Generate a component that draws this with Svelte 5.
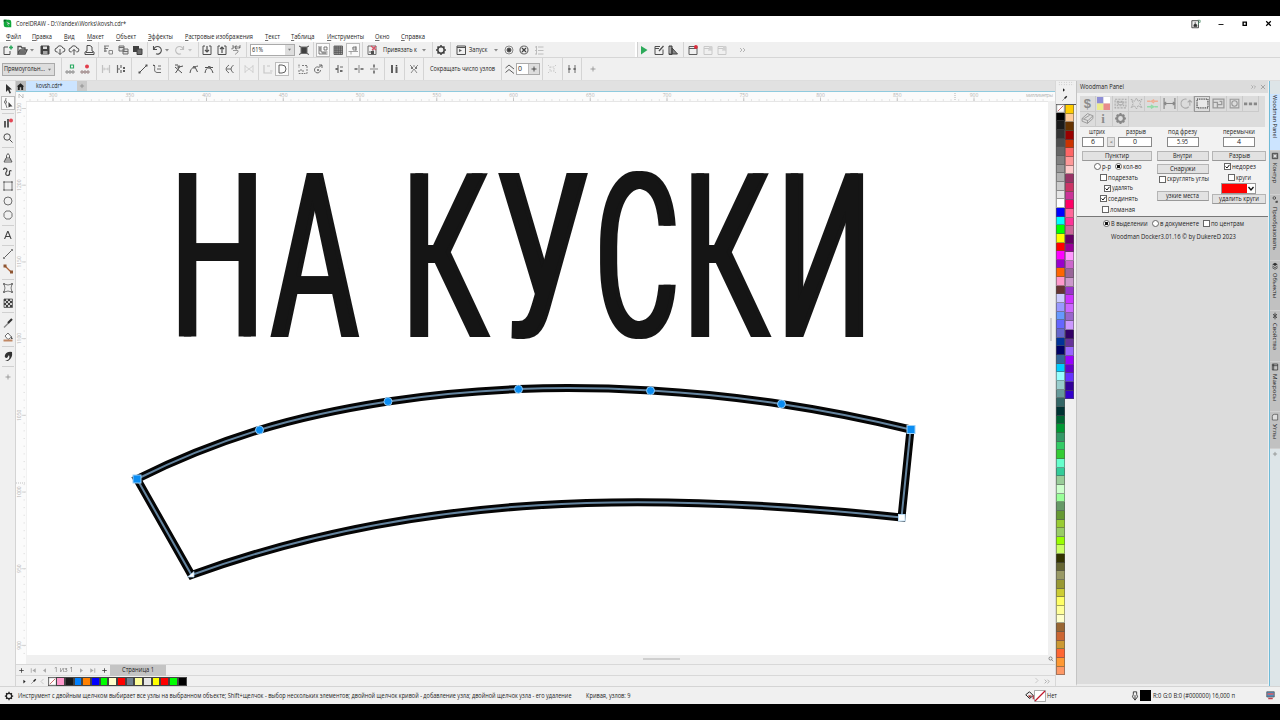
<script>
  // icons are drawn on a 12x12 grid: [path, fill, stroke, stroke width]
  const ink = '#333';
  const pale = '#b5b5b5';
  const icons = {
    logo: [['M1 1H8Q11 1 11 4V11H4Q1 11 1 8Z', '#10a83a'], ['M1 4L5 1H1Z', '#075b24'], ['M4 3L9 6L7 9Z', '#fff'], ['M3 2L8 8', '', '#0b6b2b', 1]],
    fresh: [['M2 3H6M2 3V10.500H8V7', '', ink, 1], ['M7 3.500H11M9 1.500V5.500', '', '#0a9d45', 1.600]],
    open: [['M2 10V2.500H5L6 4H9V5.500M2 10L4 6H11L9 10Z', '', ink, 1.300], ['M4 6.500H10L9 10H2.500Z', '#555']],
    save: [['M2 2H10V10H2Z', '#222', '#222', 1], ['M4 2.500H8V5H4Z', '#ddd'], ['M4 7H8.500V10H4Z', '#999']],
    cloudDown: [['M3.500 8H3A2 2 0 0 1 3 4A3 3 0 0 1 8.800 4A2 2 0 0 1 9 8H8.500', '', ink, 1], ['M6 5V10.500M4 8.500L6 10.500L8 8.500', '', ink, 1]],
    cloudUp: [['M3.500 8H3A2 2 0 0 1 3 4A3 3 0 0 1 8.800 4A2 2 0 0 1 9 8H8.500', '', ink, 1], ['M6 11V5.500M4 7.500L6 5.500L8 7.500', '', ink, 1]],
    print: [['M4 7V1.500H7L9 3V7M4 7L2 8V10.500H11V8L9 7M3 8.500H10', '', ink, 1]],
    cut: [['M2 2H7M2 4.500H6M2 7H5M3 2V8', '', '#666', 1.200], ['M7 6.500H10.500V10H7Z', '', '#777', 1]],
    copy: [['M2 2H7V7H2ZM6 5H11V10H6Z', '#ddd', '#555', 1], ['M2 3.500H7M6 7.500H11', '', '#555', 1]],
    paste: [['M2 2H8V8H2Z', '#222'], ['M6 5H11V10.500H6Z', '#555', '#222', 1]],
    undo: [['M2.500 2V5.500H6M3 5A3.800 3.800 0 1 1 5 9.800', '', ink, 1.100]],
    redo: [['M9.500 2V5.500H6M9 5A3.800 3.800 0 1 0 7 9.800', '', pale, 1.100]],
    down: [['M4 5H8L6 7.500Z', '#777']],
    downPale: [['M4 5H8L6 7.500Z', '#bbb']],
    imp: [['M4 2H2V10.500H10V2H8', '', ink, 1], ['M6 2V8M4 6L6 8L8 6', '', ink, 1.200]],
    exp: [['M4 2H2V10.500H10V2H8', '', ink, 1], ['M6 9V3M4 5L6 3L8 5', '', ink, 1.200]],
    pdf: [['M2 2H4V4H2V5.500M5.500 5V2H7V5ZM9 5V2H11M9 3.500H10.500', '', '#444', .8], ['M3 6.500H8V8L5 10.500', '', '#888', 1]],
    full: [['M3 3H9V9.500H3Z', '#222', '#555', 1], ['M1 2L3 3M11 2L9 3M1 10.500L3 9.500M11 10.500L9 9.500', '', '#333', 1]],
    rulers: [['M2 2V10H10.500M4 2V8H10.500M2 4H4M2 6H4M6 8V10M8 8V10M7 3H10V6H7Z', '', '#555', .9]],
    grid: [['M2 2H10.500V10.500H2ZM4 2V10.500M6.200 2V10.500M8.300 2V10.500M2 4H10.500M2 6.200H10.500M2 8.300H10.500', '#999', '#333', .8]],
    guides: [['M4 10.500V7M1.500 7.500H11M5 4H9M9 2V7', '', '#888', .9], ['M6 3H9V6H6Z', '', '#555', .8]],
    snap: [['M2 2V10.500H10V2ZM3 8H7V5', '', '#555', 1], ['M5 2L10 6M10 2L6 6', '', '#d6354c', 1.200], ['M5 7H8V10H5Z', '#333']],
    gear: [['M9.200 6A3.200 3.200 0 1 1 2.800 6A3.200 3.200 0 0 1 9.200 6Z', '', '#222', 1.500], ['M6 1V2.500M6 9.500V11M1 6H2.500M9.500 6H11M2.500 2.500L3.600 3.600M8.400 8.400L9.500 9.500M2.500 9.500L3.600 8.400M8.400 3.600L9.500 2.500', '', '#222', 1.500]],
    launch: [['M2 2H10.500V10.500H2ZM2 3.500H10.500', '', '#333', 1], ['M4 5L7 6.500L4 8Z', '#444']],
    dotRing: [['M10 6A4 4 0 1 1 2 6A4 4 0 0 1 10 6Z', '', '#777', 1], ['M8 6A2 2 0 1 1 4 6A2 2 0 0 1 8 6Z', '#222', '#333', 1]],
    crossRing: [['M10 6A4 4 0 1 1 2 6A4 4 0 0 1 10 6Z', '', '#555', 1.200], ['M4 4L8 8M8 4L4 8', '', '#222', 1.300]],
    list: [['M3.500 2V10.500M5 3H10.500M5 6.500H10.500M5 10H10.500M3.500 3H2M3.500 6.500H2M3.500 10H2', '', pale, 1]],
    play: [['M3 2L9.500 6L3 10.500Z', '#0b9d3f']],
    macroEdit: [['M10 5.500V10.500H2V2.500H7M2 4.500H6', '', ink, 1], ['M6 7L10.500 2', '', ink, 1.300]],
    vba: [['M2 2V10.500H5V2ZM5 4L10.500 10H5Z', '#777', '#222', 1], ['M2 4H4M2 6H4M2 8H4', '', '#ddd', .7]],
    record: [['M2 2.500H10V10.500H2ZM2 4.500H10', '', '#444', 1], ['M10.800 3A1.900 1.900 0 1 1 7 3A1.900 1.900 0 0 1 10.800 3Z', '#d80d20']],
    winPale: [['M2 2.500H10V10.500H2ZM2 4.500H10M6 6H10', '', '#c2c2c2', 1], ['M7 2H10V6H7Z', '#ccc']],
    more: [['M4 4L6 6L4 8M7 4L9 6L7 8', '', '#999', .8]],
    plus: [['M6 3.500V8.500M3.500 6H8.500', '', '#888', .9]],
    plusDark: [['M6 3V9M3 6H9', '', '#333', 1]],
    addNode: [['M6.500 2H9.500V5H6.500Z', '#fff', '#0b9d4a', 1.200], ['M2 8H4V10H2ZM5 8H7V10H5ZM8 8H10V10H8Z', '', '#666', .8]],
    delNode: [['M10 3.500A2 2 0 1 1 6 3.500A2 2 0 0 1 10 3.500Z', '#e02030'], ['M2 8H4V10H2ZM5 8H7V10H5ZM8 8H10V10H8Z', '', '#755', .8]],
    joinPale: [['M2.500 2V10M9.500 2V10M2.500 6H5M7 6H9.500', '', '#bbb', 1.200], ['M4 4.500L5.500 6L4 7.500M8 4.500L6.500 6L8 7.500', '', '#bbb', .8]],
    breakNode: [['M2.500 2V10M6 2V5M6 7V10M2.500 6H5', '', '#555', 1.200], ['M8 4H10V6H8ZM8 7H10V9H8Z', '#444']],
    toLine: [['M2.500 9.500L9.500 2.500', '', ink, 1], ['M1.500 8.500H3.500V10.500H1.500ZM8.500 1.500H10.500V3.500H8.500Z', ink]],
    toCurve: [['M2 2C6 2 1 9 6 9.500H10M2 2.500H4M7 3H10M6 6H10', '', '#444', .9]],
    cusp: [['M2 2H5M2 4L9 10M6 4L10 3M2.500 10L6 5', '', ink, 1], ['M4.500 2.500H7V5H4.500Z', '#555']],
    smooth: [['M2 10C3 4 6 4 10 3M7 4L9.500 9', '', ink, 1], ['M5 3H7.500V5.500H5Z', '#555']],
    symm: [['M2 10C3 3 8 3 10 10M2 4.500H10', '', ink, 1], ['M5 3H7.500V5.500H5Z', '#555']],
    reverse: [['M6 2Q0 6 6 10M10.500 2Q5.500 6 10.500 10M3.500 6H8', '', '#555', 1]],
    closePale: [['M2 2V10M10 2V10M2 3L10 9M2 9L10 3', '', '#ccc', 1]],
    extractPale: [['M2 2V10H10M8 8H10.500M5 3H8', '', '#c0c0c0', 1.200]],
    closeCurve: [['M3 2H6A4 4 0 0 1 6 10H3Z', '', '#444', 1]],
    stretch: [['M2 1.500V5M2 7V10.500H6V7H2M5 2.500H10M10 3V10.500H7', '', '#666', 1, '2 1']],
    rotate: [['M8.500 7A3 3 0 1 1 7 4.300L10 2M7 2H10V5', '', '#555', 1], ['M5 6H7V8H5Z', '#777']],
    align: [['M5 2V10M2 6H4M7 4H10M7 8H10', '', '#555', 1.200], ['M3 5H5V7H3ZM7 7H9V9H7Z', '#555']],
    reflH: [['M6 2V10', '', '#777', 1], ['M1.500 6H4.500M7.500 6H10.500', '', '#444', 1.500]],
    reflV: [['M2 6H10', '', '#777', 1], ['M6 1.500V4.500M6 7.500V10.500', '', '#444', 1.500]],
    elastic: [['M3 2H5V10H3ZM7.500 4H9.500V10H7.500Z', '#444'], ['M8.500 2V3.500', '', '#222', 1.500]],
    selectAll: [['M2 2L4 4M10 2L8 4M6 2V4M3 10L6 6L9 10', '', '#777', 1], ['M3 4H5V6H3ZM7 4H9V6H7Z', '#666']],
    wave: [['M1.500 5L5 2L10 6M1.500 9.500L5 6.500L10 10.500', '', '#444', 1]],
    bboxPale: [['M2 2L4 4M10 2L8 4M2 10L4 8M10 10L8 8M4 4H8V8H4Z', '', '#c2c2c2', 1, '1.500 1']],
    bars: [['M3 2V10M9 2V10', '', '#555', 1], ['M2.300 5H4.500V7H2.300ZM7.500 5H9.700V7H7.500Z', '#555']],
    pointer: [['M4 1V9L6 7L7.500 10.500L9 10L7.500 6.500H10Z', '#111']],
    shape: [['M4 1Q2 5 5 11', '', '#555', .9], ['M2.500 4H4.500V6H2.500Z', '#fff', '#444', .7], ['M6.500 5L10.500 9.500H8.500L6.500 10.500Z', '#222']],
    crop: [['M2 4H4V10.500H2ZM5 2H7V10.500H5Z', '#444'], ['M11 3.500A2 2 0 1 1 7 3.500A2 2 0 0 1 11 3.500Z', '#e02a3a']],
    zoom: [['M8.300 5A3.200 3.200 0 1 1 1.900 5A3.200 3.200 0 0 1 8.300 5ZM7.500 7.500L10.500 10.500', '', '#333', 1]],
    pen: [['M2 10H10L8 6H4ZM4.500 6V3.500L6 1.500L7.500 3.500V6M3 8H9', '', '#333', .9]],
    freehand: [['M1.500 4Q2 1.500 4 2.500Q6 4 4 6.500Q3 9.500 6 9.500Q8 9 7.500 6.500Q7 4 9.500 5', '', '#222', 1.200]],
    rect: [['M2 2H10V10H2Z', '', '#555', .9], ['M1.200 1.200H2.800V2.800H1.200ZM9.200 1.200H10.800V2.800H9.200ZM1.200 9.200H2.800V10.800H1.200ZM9.200 9.200H10.800V10.800H9.200Z', '#555']],
    ellipse: [['M10 6A4 4 0 1 1 2 6A4 4 0 0 1 10 6Z', '', '#444', .9]],
    polygon: [['M4 2H8L10 4.500V7.500L8 10H4L2 7.500V4.500Z', '', '#444', .9]],
    line: [['M2 10L10 2', '', '#333', .9], ['M1 9H3V11H1ZM9 1H11V3H9Z', '#777']],
    connector: [['M3 3L9 9', '', '#a54b16', 1.300], ['M1.500 1.500H4.500V4.500H1.500ZM8 7.500H11V10.500H8Z', '#7c3a12']],
    envelope: [['M2 2Q6 4 10 2Q8 6 10 10Q6 8 2 10Q4 6 2 2Z', '', '#555', .9], ['M1 1H3V3H1ZM9 1H11V3H9ZM1 9H3V11H1ZM9 9H11V11H9Z', '#666']],
    checker: [['M2 2H10.500V10.500H2Z', '#ccc', '#333', .8], ['M2 2H4V4H2ZM6 2H8V4H6ZM4 4H6V6H4ZM8 4H10V6H8ZM2 6H4V8H2ZM6 6H8V8H6ZM4 8H6V10H4ZM8 8H10V10H8Z', '#222']],
    dropper: [['M2 10.500L7 5.500', '', '#777', 1.500], ['M6 6L10 2', '', '#111', 2.200]],
    bucket: [['M3 5L6 2L9.500 6L6 8.500Z', '#fff', '#444', .9], ['M1.500 8.500H10.500V10.500H1.500Z', '#b9774c'], ['M9 5L11 8H9Z', '#333']],
    brush: [['M3 10.500Q9 10 7 5L5 8Q2 8 3 5Q5 1 10 2Q11 8 6 11Z', '#111']],
    noFill: [['M1 1H11V11H1Z', '#fff', '#777', .8], ['M2.500 9.500L9.500 2.500', '', '#c04040', 1]],
    noFillBig: [['M.500 .500H11.500V11.500H.500Z', '#fff', '#777', .6], ['M1 11L11 1', '', '#c0182c', 1.200]],
    arrow: [['M4.500 3.500L7.500 6L4.500 8.500Z', '#222']],
    dropMini: [['M3 9L6 6', '', '#888', 1], ['M6 6L9 3', '', '#222', 1.800]],
    home: [['M1 6L6 1.500L11 6H9.500V10.500H7V7H5V10.500H2.500V6Z', '#222']],
    first: [['M3 3V9', '', '#aaa', 1.200], ['M9 3V9L4.500 6Z', '#aaa']],
    prev: [['M8 3V9L4 6Z', '#aaa']],
    next: [['M4 3V9L8 6Z', '#aaa']],
    last: [['M9 3V9', '', '#aaa', 1.200], ['M3 3V9L7.500 6Z', '#aaa']],
    left: [['M7.500 2.500L4 6L7.500 9.500', '', '#bbb', 1]],
    right: [['M4.500 2.500L8 6L4.500 9.500', '', '#bbb', 1]],
    user: [['M1 2H9V10.500H1Z', '#eee', '#333', 1], ['M5 3.500V8M3.500 9H7V7L5 6L3.500 7Z', '#333', '#333', .8], ['M8 1.500H11V4H9V7', '', '#4a8a66', .9]],
    min: [['M3.500 6.500H8.500', '', '#222', 1]],
    max: [['M4.500 4.500H8V8H4.500Z', '', '#000', 1.500]],
    close: [['M3.500 3.500L8.500 8.500M8.500 3.500L3.500 8.500', '', '#000', 1.300]],
    closeGrey: [['M3.500 3.500L8.500 8.500M8.500 3.500L3.500 8.500', '', '#888', .8]],
    quad: [['M0 0H6V6H0Z', '#8e8ed6'], ['M6 0H12V6H6Z', '#fff'], ['M0 6H6V12H0Z', '#ecec8c'], ['M6 6H12V12H6Z', '#e88c8c']],
    frames: [['M1 2H11V10H1ZM3 4H9V8H3Z', '', '#aaa', 1, '2 1'], ['M4 5H8V7H4Z', '', '#aaa', .8]],
    burst: [['M1 2L4 4L6 1L7.500 4L11 2L9 6L11 10L7.500 8L6 11L4 8L1 10L3 6Z', '', '#aaa', .9, '2 .700']],
    swap: [['M1 4H4M7 4H11M7.500 2.500L5 4L7.500 5.500', '', '#f0ae94', 1.400], ['M1 9H5M8 9H11M4.500 7.500L7 9L4.500 10.500', '', '#93dba8', 1.400]],
    span: [['M1 1V11M11 1V11M1 6H11M3 4.500L1 6L3 7.500M9 4.500L11 6L9 7.500', '', '#888', 1.100]],
    turn: [['M7 2A4.200 4.200 0 1 0 9 9M10 8V3M8 5L10 3L12 5', '', '#aaa', 1]],
    dashRect: [['M1 2H11V10H1Z', '#e8e8e8', '#333', 1.200, '1 1']],
    nest: [['M1 2H11V10H1ZM1 5H5V10M7 4H9V7H5', '', '#999', 1.200]],
    circleBox: [['M2 2H10V10H2ZM8.500 6A2.500 2.500 0 1 1 3.500 6A2.500 2.500 0 0 1 8.500 6Z', '', '#999', 1]],
    dots: [['M0 5H3V7.500H0ZM4.500 5H7.500V7.500H4.500ZM9 5H12V7.500H9Z', '#888']],
    board: [['M1 6L6 1.500L11 3.500L6.500 8ZM1 6V8.500L6 10.500V8M6 10.500L11 6V3.500M3 6L8 3', '', '#999', .9]],
    gearGrey: [['M9.200 6A3.200 3.200 0 1 1 2.800 6A3.200 3.200 0 0 1 9.200 6Z', '', '#888', 2], ['M6 1V2.500M6 9.500V11M1 6H2.500M9.500 6H11M2.500 2.500L3.600 3.600M8.400 8.400L9.500 9.500M2.500 9.500L3.600 8.400M8.400 3.600L9.500 2.500', '', '#888', 1.800]],
    tabOutline: [['M2 2H10V10H2Z', '#999', '#444', 1.400], ['M4.500 4.500H7.500V7.500H4.500Z', '#ddd']],
    tabTransform: [['M7 3A2 2 0 1 1 3 3A2 2 0 0 1 7 3ZM6 9H9', '', '#333', 1.100], ['M8 7H10V10H8Z', '#333']],
    tabObjects: [['M6 1L10 3.500L6 6L2 3.500Z', '#333'], ['M2 6L6 8.500L10 6M2 8.500L6 11L10 8.500', '', '#333', 1.100]],
    tabProps: [['M3 3L9 9M9 3L3 9M6 1V11', '', '#444', 1.300], ['M4 4H8V8H4Z', '#555']],
    tabMacros: [['M2 1.500H10V10.500H2ZM4 1.500V10.500M2 4H10', '', '#333', 1.100]],
    tabCorners: [['M2 10.500V5Q2 2 5 2H10V10.500Z', '#ddd', '#444', 1]],
    nib: [['M4 1H8V4L9 7L6 11L3 7L4 4ZM6 5V10', '', '#333', 1.100]],
    proof: [['M1 1H11V8H1Z', '#4b8fc0', '#555', 1], ['M2 3H10V5H2Z', '#e05a62'], ['M3 10H9', '', '#c04450', 2]],
    fillPot: [['M1 5L6 1L11 6L6 10Z', '#eee', '#222', 1.300], ['M4 6H9L6 9Z', '#922'], ['M11 6V11', '', '#b01c2c', 1.500]]
  };

  const menu = [
    ['Файл', 6, 15], ['Правка', 32, 20], ['Вид', 64, 10.5], ['Макет', 86.5, 17], ['Объект', 116, 20],
    ['Эффекты', 148, 25], ['Растровые изображения', 184.500, 68], ['Текст', 264.500, 15], ['Таблица', 291, 23.500],
    ['Инструменты', 326.500, 37], ['Окно', 375, 14.500], ['Справка', 401, 24]
  ];

  // [kind, left edge, label, label width]
  const standardBar = [
    ['gap', 0], ['fresh', 2], ['open', 16], ['down', 26], ['save', 39], ['cloudDown', 54], ['cloudUp', 68], ['print', 83],
    ['sep', 98], ['cut', 102], ['copy', 117], ['paste', 131], ['sep', 147], ['undo', 151], ['down', 161], ['redo', 174],
    ['downPale', 184], ['sep', 198], ['imp', 201], ['exp', 216], ['pdf', 230], ['sep', 246], ['combo', 250, '61%', 11],
    ['full', 298], ['sep', 313], ['rulers', 317, 'on'], ['grid', 332], ['guides', 347, 'on'], ['sep', 362], ['snap', 366],
    ['text', 383, 'Привязать к', 34], ['down', 418], ['sep', 432], ['gear', 435], ['sep', 450], ['launch', 455],
    ['text', 468.500, 'Запуск', 18.500], ['down', 490], ['dotRing', 503], ['crossRing', 518], ['list', 533],
    ['grip', 635], ['play', 638], ['macroEdit', 653], ['vba', 667], ['sep', 683], ['record', 687], ['winPale', 702],
    ['winPale', 716], ['more', 736]
  ];
  const propertyBar = [
    ['gap', 0], ['combo', 2, 'Прямоугольн...', 41], ['sep', 61], ['addNode', 64], ['delNode', 79], ['sep', 96],
    ['joinPale', 100], ['breakNode', 115], ['sep', 131], ['toLine', 137], ['toCurve', 151], ['sep', 168], ['cusp', 173],
    ['smooth', 188], ['symm', 203], ['sep', 219], ['reverse', 223], ['sep', 239], ['closePale', 243], ['sep', 258],
    ['extractPale', 262], ['closeCurve', 276, 'on'], ['sep', 293], ['stretch', 297], ['rotate', 312], ['sep', 329],
    ['align', 333], ['sep', 348], ['reflH', 353], ['reflV', 368], ['sep', 384], ['elastic', 388], ['sep', 404],
    ['selectAll', 408], ['sep', 423], ['text', 430, 'Сокращать число узлов', 65], ['sep', 501], ['wave', 504],
    ['spin', 516, '0', 4], ['sep', 542], ['bboxPale', 546], ['sep', 562], ['bars', 566], ['sep', 581], ['plus', 587]
  ];
  const toolbox = [
    ['gap', 80], ['pointer', 83], ['shape', 97, 'on'], ['sep', 113], ['crop', 117], ['zoom', 132], ['sep', 147],
    ['pen', 152], ['freehand', 166], ['rect', 180], ['ellipse', 195], ['polygon', 209], ['sep', 225], ['letterTool', 229],
    ['sep', 245], ['line', 248], ['connector', 263], ['sep', 279], ['envelope', 282], ['checker', 297], ['sep', 312],
    ['dropper', 317], ['bucket', 331], ['sep', 346], ['brush', 350], ['sep', 366], ['plus', 371]
  ];

  // every cell runs up to the start of the next one
  function cells(items) {
    return items.map(([kind, at, label, len], i) => ({
      kind,
      label,
      len,
      size: i + 1 < items.length ? items[i + 1][1] - at : 14
    }));
  }

  const leftColors = '000000 1a1a1a 333333 4d4d4d 666666 808080 999999 b3b3b3 cccccc e6e6e6 ffffff 0000ff 00ffff 00ff00 ffff00 ff0000 ff00ff 9900cc ff6600 ff99cc 663333 ccccff 9999ff 6699ff 6666ff 6666cc 003399 000066 336699 00ccff 99ffff 99cccc 669999 336666 003333 006633 009933 339966 33cc66 33cc33 66ffcc 33cc99 99cc99 ccffcc 99ff99 669966 669933 99cc33 99cc66 99ff00 ccff66 333300 666633 999966 999933 cccc33 ffff66 ffff99 ffffcc 996633 cc6633 cc9933 ff6633 ff9933 ff9966'.split(' ');
  const rightColors = 'ffcc00 ffcc99 663300 990000 cc3300 ff6666 ff9999 ffcccc 993366 cc3366 cc3399 ff0066 ff6699 ff3399 cc6699 660066 990099 ff99ff cc66cc 996699 cc99cc 9933cc cc33ff cc66ff 9966cc cc99ff 330066 663399 9966ff 9900ff 6600cc 6633ff 330099 3300cc'.split(' ');
  const docColors = 'ff99cc 1a1a1a 0080ff ff8000 0000ff 00ff00 ffffcc ff0000 708090 ffff99 e6e6e6 ffff00 ff0000 00ff00 000000'.split(' ');

  const panelIcons = ['dollar', 'quad', 'frames', 'burst', 'swap', 'span', 'turn', 'dashRect', 'nest', 'circleBox', 'dots', 'board', 'info', 'gearGrey'];

  const sideTabs = [
    ['', 'Woodman Panel', 43, 57], ['tabOutline', 'Контур', 20, 44], ['tabTransform', 'Преобразовать', 43, 66],
    ['tabObjects', 'Объекты', 25, 50], ['tabProps', 'Свойства', 27, 51], ['tabMacros', 'Макросы', 27, 50], ['tabCorners', 'Углы', 15, 37]
  ];

  // headline letters: glyph, left edge, advance width
  const headline = [
    ['Н', 168, 94], ['А', 268.500, 87.500], ['К', 398.500, 87.500], ['У', 492.500, 95], ['С', 592.500, 84], ['К', 679.500, 87.500], ['И', 774, 96]
  ];

  const outline = 'M137 479C176.500 459.200 217.200 442.900 259 430C300.800 417.100 344.700 408.300 388 401.500C431.300 394.700 475.200 390.800 519 389C562.800 387.200 607.300 388 651 390.500C694.700 393 737.800 397.500 781 404C824.200 410.500 867.200 419 910.500 429.500L901.500 517.500C650 491 420 492 191.500 575Z';
  const nodes = [[259.500, 430], [388, 401.500], [518.500, 389.300], [650.500, 390.700], [781.500, 404]];

  const hTicks = Array.from({ length: 133 }, (_, i) => 30 + i * 7.675);
  const vTicks = Array.from({ length: 72 }, (_, i) => 108.500 + i * 7.675);
  const hLabels = Array.from({ length: 13 }, (_, i) => [53 + i * 76.750, 300 + i * 50]);
  const vLabels = Array.from({ length: 8 }, (_, i) => [108.500 + i * 76.700, 1250 - i * 50]);
</script>

{#snippet icon(name, size = 12)}
  <svg class="icon" width={size} height={size} viewBox="0 0 12 12">
    {#each icons[name] ?? [] as [d, fill, stroke, width, dash]}
      <path {d} fill={fill || 'none'} stroke={stroke || 'none'} stroke-width={width} stroke-dasharray={dash} />
    {/each}
    {#if name === 'letterTool'}<text x="2" y="10" class="glyph thin">A</text>{/if}
    {#if name === 'dollar'}<text x="2.500" y="10.300" class="glyph">$</text>{/if}
    {#if name === 'info'}<text x="4" y="10" class="glyph serif">i</text>{/if}
  </svg>
{/snippet}

{#snippet label(text, width, size = 6.3)}
  <svg class="label" {width} height="10">
    <text y="7.300" font-size={size} textLength={width} lengthAdjust="spacingAndGlyphs">{text}</text>
  </svg>
{/snippet}

{#snippet bar(items)}
  {#each cells(items) as cell}
    <div class="cell" style="width:{cell.size}px">
      {#if cell.kind === 'sep'}
        <i class="sep"></i>
      {:else if cell.kind === 'grip'}
        <i class="sep grip"></i>
      {:else if cell.kind === 'text'}
        {@render label(cell.label, cell.len)}
      {:else if cell.kind === 'combo'}
        <div class="combo" class:grey={cell.len > 20} class:wide={cell.len > 20}>
          <span>{@render label(cell.label, cell.len)}</span>
          <b>{@render icon('down', 9)}</b>
        </div>
      {:else if cell.kind === 'spin'}
        <div class="spin"><span>{@render label(cell.label, cell.len)}</span><b>{@render icon('plusDark', 10)}</b></div>
      {:else if cell.kind !== 'gap'}
        <span class="tool" class:on={cell.label === 'on'}>{@render icon(cell.kind)}</span>
      {/if}
    </div>
  {/each}
{/snippet}

{#snippet check(text, width, on = false)}
  <span class="check">
    <i class="box">
      {#if on}<svg width="7" height="7"><path d="M1.500 3.500L3 5L5.500 1.800" fill="none" stroke="#111" /></svg>{/if}
    </i>{@render label(text, width)}
  </span>
{/snippet}

{#snippet radio(text, width, on = false)}
  <span class="check"><i class="box round" class:on></i>{@render label(text, width)}</span>
{/snippet}

<div class="app">
  <header class="title">
    <span class="logo">{@render icon('logo', 9)}</span>
    {@render label('CorelDRAW - D:\\Yandex\\Works\\kovsh.cdr*', 110)}
    <div class="window-buttons">
      {@render icon('user', 10)}{@render icon('min')}{@render icon('max', 11)}{@render icon('close', 11)}
    </div>
  </header>
  <nav class="menu">
    {#each menu as [text, x, len], i}
      <div class="cell" style="width:{(menu[i + 1]?.[1] ?? 430) - x}px">
        <svg class="label" width={len} height="10">
          <text y="7.300" font-size="6.300" textLength={len} lengthAdjust="spacingAndGlyphs"><tspan class="key">{text[0]}</tspan>{text.slice(1)}</text>
        </svg>
      </div>
    {/each}
  </nav>
  <div class="toolbar">{@render bar(standardBar)}</div>
  <div class="toolbar property">{@render bar(propertyBar)}</div>

  <div class="main">
    <aside class="toolbox">
      {#each cells(toolbox) as cell}
        <div class="slot" style="height:{cell.size}px">
          {#if cell.kind === 'sep'}
            <i class="hsep"></i>
          {:else if cell.kind !== 'gap'}
            <span class="tool" class:on={cell.label === 'on'}>{@render icon(cell.kind)}</span>
          {/if}
        </div>
      {/each}
    </aside>

    <section class="document">
      <div class="tabs">
        <span class="home">{@render icon('home', 9)}</span>
        <span class="tab">{@render label('kovsh.cdr*', 26.5)}</span>
        <span class="new-tab">{@render icon('plus', 10)}</span>
      </div>
      <svg class="ruler" width="1039" height="9" viewBox="16 92 1039 9">
        <path d="M19 98V94L23 98V94" fill="none" stroke="#aaa" stroke-width=".700" />
        {#each hTicks as x}<path d="M{x} 99V101" stroke="#ddd" stroke-width=".800" />{/each}
        {#each hLabels as [x, value]}
          <path d="M{x} 97.500V101" stroke="#bbb" stroke-width=".800" />
          <text {x} y="97.300" text-anchor="middle">{value}</text>
        {/each}
        <rect x="1018" y="93" width="36" height="5" fill="#fbfbfb" />
        <text x="1026" y="97.300" textLength="27">миллиметры</text>
        <path d="M955 93V101" stroke="#999" stroke-width=".700" stroke-dasharray="1 1" />
      </svg>
      <div class="work">
        <svg class="ruler" width="10" height="563" viewBox="16 101 10 563">
          {#each vTicks as y}<path d="M23.500 {y}H25" stroke="#ddd" stroke-width=".800" />{/each}
          {#each vLabels as [y, value]}
            <path d="M21.500 {y}H26" stroke="#ccc" stroke-width=".800" />
            <text transform="translate(21 {y}) rotate(-90)" text-anchor="middle">{value}</text>
          {/each}
          <path d="M16 483H26" stroke="#aaa" stroke-width=".700" stroke-dasharray="1 1" />
        </svg>
        <div class="canvas-col">
          <svg class="canvas" width="1022" height="554" viewBox="26 101 1022 554">
            <path d="M26 655V101.500H1048" fill="none" stroke="#e6e6e6" />
            <g class="headline">
              {#each headline as [letter, x, len]}
                <text {x} y="336.500" textLength={len} lengthAdjust="spacingAndGlyphs">{letter}</text>
              {/each}
            </g>
            <path d={outline} fill="none" stroke="#050505" stroke-width="8" stroke-miterlimit="5" />
            <path d={outline} fill="none" stroke="#64849f" stroke-width="2" />
            {#each nodes as [cx, cy]}
              <circle {cx} {cy} r="4" fill="#0b8df2" stroke="#9bd0f8" stroke-width=".900" />
            {/each}
            <rect x="133" y="475" width="8" height="8" fill="#0b8df2" stroke="#9bd0f8" />
            <rect x="907" y="425.500" width="8" height="8" fill="#0b8df2" stroke="#9bd0f8" />
            <rect x="898.500" y="514.500" width="6.500" height="6.500" fill="#fff" stroke="#b9dcf5" />
            <path d="M187.500 577L194 571.500V577Z" fill="#fff" stroke="#a9d3f3" stroke-width=".700" />
          </svg>
          <div class="hscroll"><i></i></div>
        </div>
        <div class="vscroll"><i></i>{@render icon('zoom', 6)}</div>
      </div>
      <div class="pages">
        {@render icon('plusDark', 9)}{@render icon('first', 9)}{@render icon('prev', 9)}
        <span class="count">{@render label('1  из  1', 19.500)}</span>
        {@render icon('next', 9)}{@render icon('last', 9)}{@render icon('plusDark', 9)}
        <span class="page">{@render label('Страница 1', 32)}</span>
      </div>
      <div class="doc-palette">
        <span class="lead">{@render icon('arrow', 9)}{@render icon('dropMini', 9)}{@render icon('left', 9)}</span>
        <i class="chip">{@render icon('noFill', 9)}</i>
        {#each docColors as color}<i class="chip" style="background:#{color}"></i>{/each}
        <span class="tail">{@render icon('right', 9)}{@render icon('more', 11)}</span>
      </div>
    </section>

    <aside class="palette">
      <div class="dots"></div>
      <div class="lead-v">{@render icon('arrow', 8)}{@render icon('dropMini', 9)}</div>
      <div class="columns">
        <div>
          <i class="swatch">{@render icon('noFill', 9)}</i>
          {#each leftColors as color}<i class="swatch" style="background:#{color}"></i>{/each}
        </div>
        <div>
          {#each rightColors as color}<i class="swatch" style="background:#{color}"></i>{/each}
        </div>
      </div>
    </aside>

    <aside class="docker">
      <div class="docker-title">
        {@render label('Woodman Panel', 44)}
        <span>{@render icon('more', 10)}{@render icon('closeGrey', 10)}</span>
      </div>
      <div class="panel-icons">
        {#each panelIcons as name}
          <span class:pressed={name === 'dashRect'}>{@render icon(name, 13)}</span>
        {/each}
      </div>
      <div class="form">
        <div class="col first">
          <div class="heads"><span>{@render label('штрих', 16)}</span><span>{@render label('разрыв', 20)}</span></div>
          <div class="inputs">
            <span class="input">{@render label('6', 4)}</span>
            <span class="button small">{@render label('<', 3, 5.500)}</span>
            <span class="input long">{@render label('0', 4)}</span>
          </div>
          <span class="button">{@render label('Пунктир', 24)}</span>
          <div class="line radios">{@render radio('р-р', 9)}{@render radio('кол-во', 18.500, true)}</div>
          <div class="line in-18">{@render check('подрезать', 30)}</div>
          <div class="line in-22">{@render check('удалять', 21, true)}</div>
          <div class="line in-18">{@render check('соединять', 30, true)}</div>
          <div class="line in-20">{@render check('ломаная', 25)}</div>
        </div>
        <div class="col second">
          <div class="heads mid"><span>{@render label('под фрезу', 29)}</span></div>
          <div class="inputs mid"><span class="input mid-in">{@render label('5.95', 11)}</span></div>
          <span class="button">{@render label('Внутри', 19)}</span>
          <span class="button gap-top">{@render label('Снаружи', 25.500)}</span>
          <div class="line near">{@render check('скруглять углы', 42)}</div>
          <span class="button narrow">{@render label('узкие места', 33)}</span>
        </div>
        <div class="col third">
          <div class="heads mid"><span>{@render label('перемычки', 32)}</span></div>
          <div class="inputs mid"><span class="input mid-in">{@render label('4', 4)}</span></div>
          <span class="button">{@render label('Разрыв', 21)}</span>
          <div class="line in-12">{@render check('недорез', 24, true)}</div>
          <div class="line in-16">{@render check('круги', 15)}</div>
          <div class="color-pick">
            <i></i><svg width="8" height="9"><path d="M1.500 3L4 6L6.500 3" fill="none" stroke="#111" stroke-width="1.300" /></svg>
          </div>
          <span class="button">{@render label('удалить круги', 40)}</span>
        </div>
      </div>
      <div class="scope">
        {@render radio('В выделении', 36.500, true)}{@render radio('в докуменете', 39)}{@render check('по центрам', 33)}
      </div>
      <div class="about">{@render label('Woodman Docker3.01.16 © by DukereD 2023', 125)}</div>
    </aside>

    <aside class="side-tabs">
      {#each sideTabs as [name, text, len, height], i}
        <div class="side-tab" class:active={i === 0} style="height:{height}px">
          {#if name}{@render icon(name, 8)}{/if}
          <svg width="10" height={len}>
            <text transform="translate(2.800 0) rotate(90)" font-size="6" textLength={len} lengthAdjust="spacingAndGlyphs">{text}</text>
          </svg>
        </div>
      {/each}
      {@render icon('plus', 10)}
    </aside>
  </div>

  <footer class="status">
    <span class="s-gear">{@render icon('gear', 10)}</span>
    <span class="s-hint">{@render label('Инструмент с двойным щелчком выбирает все узлы на выбранном объекте; Shift+щелчок - выбор нескольких элементов; двойной щелчок кривой - добавление узла; двойной щелчок узла - его удаление', 553.500)}</span>
    {@render label('Кривая, узлов: 9', 44.500)}
    <div class="s-right">
      {@render icon('fillPot', 9)}<span class="s-fill">{@render icon('noFillBig', 12)}</span>
      <span class="s-none">{@render label('Нет', 10)}</span>
      {@render icon('nib', 10)}<i class="s-stroke"></i>
      <span class="s-rgb">{@render label('R:0 G:0 B:0 (#000000)  16,000 п', 82)}</span>
      {@render icon('proof', 9)}
    </div>
  </footer>
</div>

<style>
  :global(body) {
    background: #000;
    overflow: hidden;
  }

  .app {
    box-sizing: border-box;
    width: 1280px;
    height: 720px;
    padding: 16px 0;
    background: #000;
    display: flex;
    flex-direction: column;
    font-family: "Open Sans", "Noto Sans", sans-serif;
    color: #222;
  }

  .app * {
    box-sizing: border-box;
  }

  svg {
    display: block;
    flex: none;
  }

  .icon {
    overflow: visible;
  }

  .label {
    overflow: visible;
    fill: #1c1c1c;
  }

  .key {
    text-decoration: underline;
  }

  .glyph {
    font: bold 12px "Liberation Sans", sans-serif;
    fill: #8c8c8c;
  }

  .glyph.thin {
    font-weight: normal;
    font-size: 11.500px;
    fill: #222;
  }

  .glyph.serif {
    font-family: "Liberation Serif", serif;
    font-size: 12px;
  }

  .title {
    height: 15px;
    background: #fff;
    display: flex;
    align-items: center;
    padding-left: 3px;
  }

  .logo {
    width: 13px;
  }

  .window-buttons {
    display: flex;
    align-items: center;
    gap: 12.500px;
    margin-left: auto;
    padding-right: 6.500px;
  }

  .window-buttons :global(svg:first-child) {
    margin-right: 1px;
  }

  .menu {
    height: 11px;
    background: #fff;
    display: flex;
    align-items: center;
    padding-left: 6px;
  }

  .toolbar {
    height: 16px;
    background: #f0f0f0;
    border-bottom: 1px solid #d6d6d6;
    display: flex;
    align-items: center;
  }

  .toolbar.property {
    height: 23px;
    border-bottom-color: #ddd;
  }

  .cell {
    flex: none;
    height: 100%;
    display: flex;
    align-items: center;
  }

  .sep {
    width: 1px;
    height: 100%;
    background: #d4d4d4;
  }

  .grip {
    width: 3px;
    background: #fff;
    border-right: 1px solid #d0d0d0;
  }

  .tool {
    display: flex;
    align-items: center;
    justify-content: center;
    width: 12px;
    height: 12px;
  }

  .tool :global(svg) {
    opacity: .85;
  }

  .tool.on {
    background: #fafafa;
    outline: 1px solid #bbb;
  }

  .combo {
    width: 45px;
    height: 12px;
    border: 1px solid #aaa;
    background: #fff;
    display: flex;
    align-items: center;
    padding-left: 1px;
    flex: none;
  }

  .combo b {
    margin-left: auto;
    height: 100%;
    background: #ddd;
    display: flex;
    align-items: center;
  }

  .combo.wide {
    width: 53px;
    height: 13px;
  }

  .combo.grey {
    background: #ddd;
  }

  .spin {
    width: 24px;
    height: 12px;
    display: flex;
    border: 1px solid #aaa;
    background: #fff;
  }

  .spin span {
    width: 11px;
    padding-left: 1px;
  }

  .spin b {
    background: #ddd;
    border-left: 1px solid #bbb;
  }

  .main {
    flex: 1;
    display: flex;
    min-height: 0;
    background: #f0f0f0;
  }

  .toolbox {
    width: 16px;
    margin-top: -1px;
    border-right: 1px solid #d4d4d4;
    flex: none;
  }

  .toolbox .slot {
    padding-left: 2px;
  }

  .hsep {
    display: block;
    width: 12px;
    height: 1px;
    background: #d0d0d0;
  }

  .document {
    width: 1040px;
    flex: none;
    display: flex;
    flex-direction: column;
    border-right: 1px solid #d8d8d8;
  }

  .tabs {
    height: 11px;
    background: #e1e1e1;
    border-bottom: 1px solid #8fcade;
    display: flex;
    flex: none;
  }

  .home {
    width: 10px;
    background: #bbb;
    padding-top: 1px;
  }

  .tab {
    width: 51px;
    background: #cce4ff;
    padding-left: 10px;
  }

  .new-tab {
    width: 10px;
    background: #cacaca;
  }

  .ruler {
    background: #fbfbfb;
  }

  .ruler text {
    font-size: 5px;
    fill: #b5b5b5;
  }

  .work {
    display: flex;
    flex: none;
  }

  .canvas {
    background: #fff;
  }

  .headline {
    font-family: Roboto, sans-serif;
    font-size: 230px;
    fill: #151515;
    filter: drop-shadow(5px 0 0 #151515);
  }

  .hscroll {
    height: 9px;
    padding: 3px 0 0 617px;
  }

  .hscroll i {
    display: block;
    width: 37px;
    height: 2px;
    background: #cfcfcf;
  }

  .vscroll {
    width: 7px;
    display: flex;
    flex-direction: column;
    justify-content: space-between;
    padding-bottom: 2px;
  }

  .vscroll i {
    width: 2px;
    height: 23px;
    margin: 217px 0 0 2px;
    background: #cfcfcf;
  }

  .pages {
    height: 12px;
    border-top: 1px solid #d8d8d8;
    border-bottom: 1px solid #d8d8d8;
    display: flex;
    align-items: center;
    gap: 2.500px;
    padding-left: 1px;
    flex: none;
  }

  .count {
    padding: 0 0 0 2px;
    margin-right: 1px;
    opacity: .6;
  }

  .page {
    width: 56px;
    height: 11px;
    margin-left: -1.500px;
    background: #c4c4c4;
    padding-left: 12px;
  }

  .doc-palette {
    flex: 1;
    display: flex;
    align-items: center;
  }

  .lead {
    display: flex;
    width: 31.500px;
    padding-left: 4px;
  }

  .chip {
    width: 8.700px;
    height: 9px;
    border: 1px solid #444;
  }

  .chip :global(svg),
  .swatch :global(svg) {
    margin: -1px;
  }

  .tail {
    margin-left: auto;
    padding-right: 3px;
    display: flex;
  }

  .palette {
    width: 20px;
    flex: none;
    background: #f0f0f0;
  }

  .dots {
    height: 5px;
    margin: 0 2px;
    background: radial-gradient(circle, #bbb 30%, transparent 40%) 0 0 / 2.500px 2.500px;
  }

  .lead-v {
    height: 18px;
    padding-left: 4px;
  }

  .columns {
    display: flex;
    align-items: flex-start;
    border-top: 1px solid #555;
  }

  .swatch {
    display: block;
    width: 9px;
    height: 8.670px;
    border: 1px solid #444;
    border-width: 0 .600px 1px 1px;
    border-color: #5558;
  }

  .docker {
    width: 193px;
    flex: none;
    background: #dcdcdc;
    border-left: 1px solid #c4c4c4;
    border-right: 1px solid #f0f0f0;
    border-bottom: 2px solid #ececec;
  }

  .docker-title {
    height: 12px;
    display: flex;
    align-items: center;
    justify-content: space-between;
    padding-left: 3px;
  }

  .docker-title span {
    display: flex;
  }

  .panel-icons {
    height: 34px;
    background: #dcdcdc;
    border: 3px solid #f0f0f0;
    border-bottom: 0;
    display: grid;
    grid-template-columns: repeat(11, 16.300px);
    grid-auto-rows: 15.500px;
  }

  .panel-icons span {
    display: flex;
    align-items: center;
    justify-content: center;
    border-right: 1px solid #cacaca;
    border-bottom: 1px solid #cacaca;
  }

  .panel-icons .pressed {
    border: 1px solid #999;
  }

  .form {
    height: 90px;
    background: #f2f2f2;
    border-bottom: 1px solid #777;
    display: flex;
    gap: 3.500px;
    padding-left: 5px;
  }

  .col.first {
    width: 70px;
    margin-right: 1px;
  }

  .col.second {
    width: 52px;
  }

  .col.third {
    width: 54px;
  }

  .heads {
    height: 10px;
    display: flex;
    justify-content: space-between;
    padding: 0 6px 0 7px;
  }

  .inputs {
    height: 14px;
    display: flex;
    gap: 3px;
  }

  .heads.mid,
  .inputs.mid {
    justify-content: center;
    padding: 0;
  }

  .input {
    width: 22px;
    height: 10px;
    background: #fff;
    border: 1px solid #888;
    display: flex;
    align-items: center;
    justify-content: center;
  }

  .input.long {
    width: 34px;
  }

  .input.mid-in {
    width: 32px;
  }

  .button {
    width: 100%;
    height: 10px;
    background: #e2e2e2;
    border: 1px solid #b5b5b5;
    border-bottom-color: #999;
    display: flex;
    align-items: center;
    justify-content: center;
    flex: none;
  }

  .button.small {
    width: 8px;
  }

  .button.gap-top {
    margin-top: 3px;
  }

  .button.narrow {
    margin-top: 6.500px;
  }

  .line {
    height: 10.600px;
    display: flex;
    align-items: center;
  }

  .radios {
    gap: 4px;
    padding-left: 12px;
    height: 11.500px;
  }

  .in-12 {
    padding-left: 12px;
    height: 11.500px;
  }

  .in-16 {
    padding-left: 16px;
  }

  .in-18 {
    padding-left: 18px;
  }

  .in-20 {
    padding-left: 20px;
  }

  .in-22 {
    padding-left: 22px;
  }

  .near {
    padding-left: 2px;
  }

  .check {
    display: flex;
    align-items: center;
    gap: 1px;
  }

  .box {
    width: 7px;
    height: 7px;
    background: #fff;
    border: 1px solid #666;
    flex: none;
  }

  .box svg {
    margin: -1px;
  }

  .box.round {
    border-radius: 50%;
  }

  .box.round.on {
    background: radial-gradient(circle, #111 40%, #fff 50%);
  }

  .color-pick {
    width: 35px;
    height: 11px;
    margin: 0 0 0 9px;
    border: 1px solid #999;
    background: #fff;
    display: flex;
  }

  .color-pick i {
    width: 25px;
    background: #f00;
  }

  .scope {
    height: 13px;
    display: flex;
    align-items: center;
    gap: 4.300px;
    padding-left: 26px;
  }

  .about {
    padding: 2px 0 0 34px;
  }

  .side-tabs {
    width: 11px;
    padding-top: 13px;
    flex: none;
    background: #dde5e8;
    border-left: 1px solid #6fbbd8;
  }

  .side-tab {
    background: #c1c1c1;
    border-bottom: 1px solid #d0d0d0;
    display: flex;
    flex-direction: column;
    align-items: center;
    gap: 3px;
    padding-top: 1px;
  }

  .side-tab.active {
    background: #cce4ff;
  }

  .side-tab svg {
    overflow: visible;
  }

  .side-tab text {
    fill: #222;
  }

  .status {
    height: 18px;
    flex: none;
    background: #f0f0f0;
    border-top: 1px solid #d4d4d4;
    display: flex;
    align-items: center;
    padding-left: 4px;
  }

  .s-gear {
    width: 14px;
  }

  .s-hint {
    width: 567.500px;
  }

  .s-right {
    display: flex;
    align-items: center;
    margin-left: auto;
    padding-right: 5px;
  }

  .s-none {
    width: 84px;
    padding-left: 1px;
  }

  .s-stroke {
    width: 11px;
    height: 11px;
    background: #000;
  }

  .s-rgb {
    width: 115px;
    padding-left: 2px;
  }
</style>
